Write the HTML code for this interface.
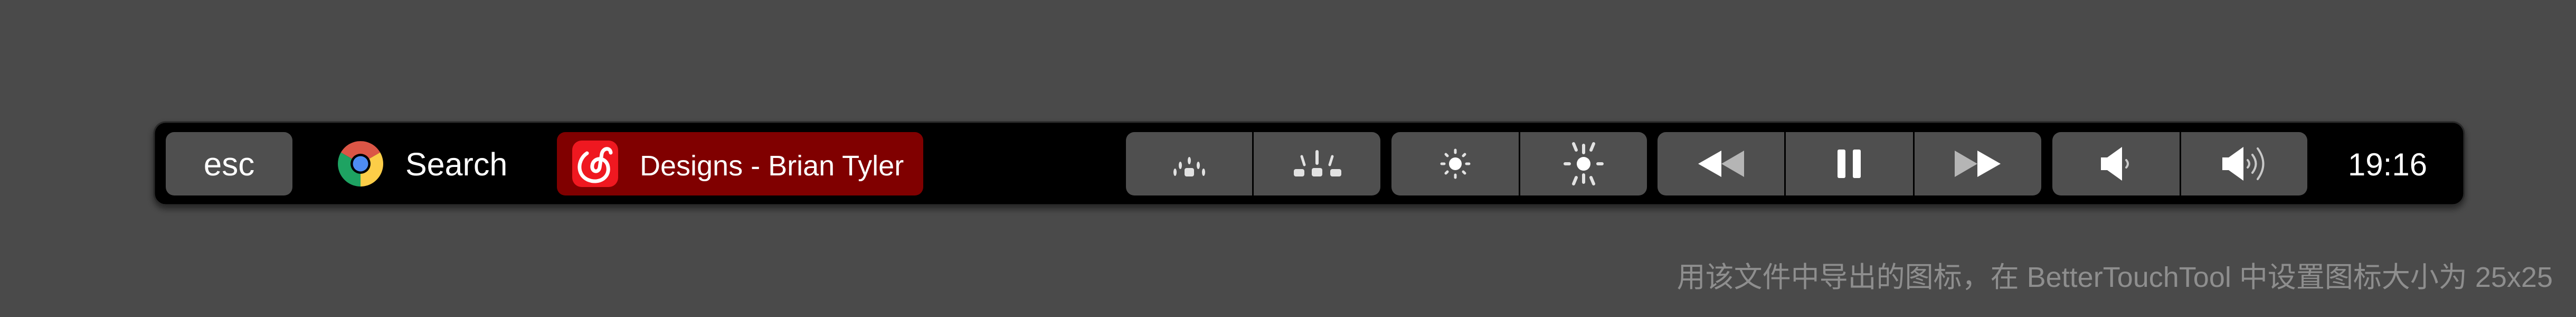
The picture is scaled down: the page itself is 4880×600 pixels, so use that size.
<!DOCTYPE html>
<html><head><meta charset="utf-8"><style>
html,body{margin:0;padding:0;background:#4a4a4a;width:4880px;height:600px;overflow:hidden}
svg{display:block}
</style></head><body>
<svg width="4880" height="600" viewBox="0 0 4880 600" xmlns="http://www.w3.org/2000/svg">
<defs><filter id="sh" x="-5%" y="-20%" width="110%" height="150%"><feDropShadow dx="0" dy="6" stdDeviation="6" flood-color="#000" flood-opacity="0.5"/></filter></defs>
<rect x="0" y="0" width="4880" height="600" fill="#4a4a4a"/>
<rect x="292" y="231" width="4376" height="157" rx="22" fill="#000" stroke="#2b2b2b" stroke-width="3" filter="url(#sh)"/>
<!-- esc -->
<rect x="314" y="250" width="240" height="120" rx="16" fill="#4f4f4f"/>
<text x="434" y="332" font-family="Liberation Sans, sans-serif" font-size="62" fill="#fff" text-anchor="middle">esc</text>
<!-- chrome -->
<path d="M683,310 L645.8,288.5 A43,43 0 0 1 720.2,288.5 Z" fill="#dc5646"/>
<path d="M683,310 L720.2,288.5 A43,43 0 0 1 683,353 Z" fill="#fccd48"/>
<path d="M683,310 L683,353 A43,43 0 0 1 645.8,288.5 Z" fill="#1ea362"/>
<circle cx="683" cy="310" r="19" fill="#000"/>
<circle cx="683" cy="310" r="14.5" fill="#4e8cf2"/>
<text x="768" y="332" font-family="Liberation Sans, sans-serif" font-size="61" fill="#fff">Search</text>
<!-- netease -->
<rect x="1055" y="250" width="694" height="120" rx="16" fill="#800000"/>
<rect x="1084" y="266" width="87" height="88" rx="18" fill="#ef1820"/>
<path d="M1112,290 C1094,302 1092,330 1113,340 C1136,350 1158,334 1151,312 C1145,296 1124,298 1122,313 C1120,326 1134,328 1136,317 L1140,291 C1143,279 1156,279 1157,289" fill="none" stroke="#fff" stroke-width="7" stroke-linecap="round" stroke-linejoin="round"/>
<text x="1212" y="332" font-family="Liberation Sans, sans-serif" font-size="54" fill="#fff">Designs - Brian Tyler</text>
<!-- group 1 -->
<rect x="2133" y="250" width="482" height="120" rx="16" fill="#4f4f4f"/>
<rect x="2372" y="250" width="3" height="120" fill="#000"/>
<g fill="#e2e2e2">
<rect x="2244" y="318" width="18" height="16" rx="4"/>
<ellipse cx="2226" cy="326" rx="3" ry="7"/><ellipse cx="2280" cy="326" rx="3" ry="7"/>
<ellipse cx="2253" cy="304" rx="3" ry="7"/><ellipse cx="2236" cy="313" rx="3" ry="7"/><ellipse cx="2270" cy="313" rx="3" ry="7"/>
<rect x="2451" y="320" width="20" height="14" rx="4"/><rect x="2485" y="318" width="20" height="16" rx="4"/><rect x="2520" y="320" width="21" height="14" rx="4"/>
<rect x="2492" y="284" width="6" height="28" rx="3"/>
</g>
<path d="M2466,296 L2471,312 M2524,296 L2519,312" stroke="#e2e2e2" stroke-width="5" stroke-linecap="round"/>
<!-- group 2 -->
<rect x="2636" y="250" width="484" height="120" rx="16" fill="#4f4f4f"/>
<rect x="2877" y="250" width="3" height="120" fill="#000"/>
<circle cx="2757" cy="310" r="12" fill="#fff"/>
<g stroke="#e2e2e2" stroke-width="5" stroke-linecap="round">
<path d="M2757,284 v5 M2757,331 v5 M2731,310 h5 M2778,310 h5 M2739,292 l3,3 M2772,325 l3,3 M2775,292 l-3,3 M2739,328 l3,-3"/>
<path d="M3000,275 v14 M3000,331 v14 M2965,310 h8 M3027,310 h8 M2986,284 l-5,-12 M3014,284 l5,-12 M2986,336 l-5,12 M3014,336 l5,12" stroke-width="6"/>
</g>
<circle cx="3000" cy="310" r="13" fill="#fff"/>
<!-- group 3 -->
<rect x="3140" y="250" width="727" height="120" rx="16" fill="#4f4f4f"/>
<rect x="3380" y="250" width="3" height="120" fill="#000"/>
<rect x="3624" y="250" width="3" height="120" fill="#000"/>
<path d="M3261,285 L3261,335 L3217,310 Z" fill="#fff"/>
<path d="M3304,285 L3304,335 L3261,310 Z" fill="#b5b5b5"/>
<rect x="3481" y="283" width="15" height="54" rx="3" fill="#fff"/>
<rect x="3510" y="283" width="15" height="54" rx="3" fill="#fff"/>
<path d="M3703,285 L3703,335 L3746,310 Z" fill="#b5b5b5"/>
<path d="M3746,285 L3746,335 L3790,310 Z" fill="#fff"/>
<!-- group 4 -->
<rect x="3888" y="250" width="483" height="120" rx="16" fill="#4f4f4f"/>
<rect x="4129" y="250" width="3" height="120" fill="#000"/>
<path d="M3980,298 h12 L4020,278 V342 L3992,322 h-12 Z" fill="#fff"/>
<path d="M4028,303 Q4034,310 4028,317" fill="none" stroke="#c8c8c8" stroke-width="4" stroke-linecap="round"/>
<path d="M4210,298 h12 L4250,278 V342 L4222,322 h-12 Z" fill="#fff"/>
<g fill="none" stroke="#c8c8c8" stroke-width="4" stroke-linecap="round">
<path d="M4258,303 Q4264,310 4258,317"/>
<path d="M4267,293 Q4280,310 4267,327"/>
<path d="M4277,281 Q4298,310 4277,339"/>
</g>
<text x="4523" y="332" font-family="Liberation Sans, sans-serif" font-size="60" fill="#fff" text-anchor="middle">19:16</text>
<!-- caption -->
<text x="4836" y="543" font-family="Liberation Sans, Noto Sans CJK SC, sans-serif" font-size="54" fill="#8e8e8e" text-anchor="end">用该文件中导出的图标，在 BetterTouchTool 中设置图标大小为 25x25</text>
</svg>
</body></html>
